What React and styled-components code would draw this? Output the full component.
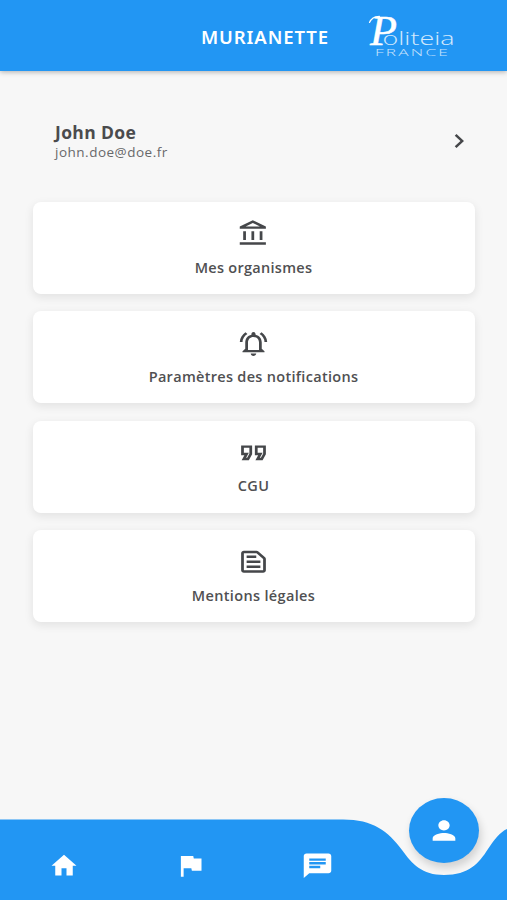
import styled, { createGlobalStyle } from 'styled-components';
import {
  MdChat,
  MdChevronRight,
  MdFlag,
  MdHome,
  MdOutlineAccountBalance,
  MdOutlineFormatQuote,
  MdOutlineNotificationsActive,
  MdOutlineTextSnippet,
  MdPerson,
} from 'react-icons/md';

const BLUE = '#2296f3';

const GlobalStyle = createGlobalStyle`
  * {
    box-sizing: border-box;
  }
  body {
    margin: 0;
    background-color: #f7f7f7;
    font-family: "Open Sans", "Noto Sans", sans-serif;
  }
`;

const Screen = styled.div`
  display: flex;
  flex-direction: column;
  width: 507px;
  height: 900px;
  overflow: hidden;
  background-color: #f7f7f7;
`;

const Header = styled.header`
  display: flex;
  flex: none;
  height: 70.5px;
  padding-left: 201px;
  background-color: ${BLUE};
  box-shadow: 0 1px 5px 0 rgba(0, 0, 0, 0.3);
`;

const Title = styled.h1`
  width: 159px;
  margin: 0;
  padding-top: 24px;
  color: white;
  font-family: "Noto Sans", sans-serif;
  font-size: 18.5px;
  line-height: 26px;
  font-weight: 600;
  letter-spacing: 0.9px;
  white-space: nowrap;
`;

const Logo = styled.svg`
  flex: none;
  width: 100px;
  height: 60px;
  margin-top: 5px;
`;

const Profile = styled.section`
  display: flex;
  flex: none;
  align-items: center;
  justify-content: space-between;
  height: 131.5px;
  padding: 8.5px 33.5px 0 55px;
`;

const ProfileName = styled.div`
  color: #4b4b4d;
  font-size: 17.5px;
  line-height: 22px;
  font-weight: 700;
  letter-spacing: 0.35px;
`;

const ProfileMail = styled.div`
  color: #68686a;
  font-size: 13.5px;
  line-height: 18px;
  letter-spacing: 0.5px;
`;

/* the glyphs are a little wider than tall, so they stretch to their box */
const Glyph = styled.span`
  display: flex;
  color: ${({ $color }) => $color || '#45474a'};

  svg {
    width: ${({ $width }) => $width || 33}px;
    height: ${({ $height }) => $height || 29.5}px;
  }
`;

const CardList = styled.main`
  display: flex;
  flex-direction: column;
  flex: 1;
  gap: 17.3px;
  padding: 0 32px 0 33px;
`;

const Card = styled.button`
  display: flex;
  flex-direction: column;
  align-items: center;
  flex: none;
  height: 92px;
  padding: 17.3px 1px 0 0;
  border: none;
  border-radius: 8px;
  background-color: white;
  box-shadow: 0 3px 9px 1px rgba(0, 0, 0, 0.08);
`;

const CardLabel = styled.span`
  margin-top: 9px;
  color: #505052;
  font-family: "Open Sans", sans-serif;
  font-size: 14.5px;
  line-height: 20px;
  font-weight: 600;
  letter-spacing: ${({ $spacing }) => $spacing}px;
`;

const NavBar = styled.nav`
  position: relative;
  flex: none;
  height: 103px;
`;

const NavShape = styled.svg`
  position: absolute;
  top: 0;
  left: 0;
  width: 507px;
  height: 103px;
`;

const NavItems = styled.div`
  position: relative;
  display: grid;
  grid-template-columns: repeat(4, 1fr);
  justify-items: center;
  padding-left: 1px;
`;

const NavItem = styled.div`
  padding-top: 54px;
`;

const ActiveItem = styled.div`
  display: flex;
  align-items: center;
  justify-content: center;
  width: 70px;
  height: 65px;
  margin-top: 1px;
  border-radius: 50%;
  background-color: ${BLUE};
  box-shadow: 2px 5px 8px 0 rgba(0, 0, 0, 0.16);
`;

const cards = [
  { label: 'Mes organismes', icon: MdOutlineAccountBalance, spacing: 0.28 },
  { label: 'Paramètres des notifications', icon: MdOutlineNotificationsActive, spacing: 0.3 },
  { label: 'CGU', icon: MdOutlineFormatQuote, spacing: 0.4 },
  { label: 'Mentions légales', icon: MdOutlineTextSnippet, spacing: 0.34 },
];

const navItems = [
  { name: 'home', icon: MdHome, width: 30 },
  { name: 'flag', icon: MdFlag, width: 33 },
  { name: 'chat', icon: MdChat, width: 33 },
];

function PoliteiaLogo() {
  return (
    <Logo viewBox="360 5 100 60" fill="white">
      <text
        x="370"
        y="45"
        fontFamily="Liberation Serif, serif"
        fontStyle="italic"
        fontSize="43"
        stroke="white"
        strokeWidth="0.5"
        textLength="27"
        lengthAdjust="spacingAndGlyphs"
      >
        P
      </text>
      <path
        d="M369.5 22.5c1.5-4 5-6 10-6.2"
        fill="none"
        stroke="white"
        strokeWidth="1.2"
        strokeLinecap="round"
      />
      <text
        x="382.5"
        y="44.5"
        fontFamily="Open Sans, sans-serif"
        fontWeight="300"
        fontSize="18"
        textLength="72"
        lengthAdjust="spacingAndGlyphs"
        opacity="0.8"
      >
        oliteia
      </text>
      <text
        x="375"
        y="55.6"
        fontFamily="Open Sans, sans-serif"
        fontWeight="300"
        fontSize="9.4"
        textLength="75"
        lengthAdjust="spacingAndGlyphs"
        letterSpacing="1.2"
        opacity="0.75"
      >
        FRANCE
      </text>
    </Logo>
  );
}

function App() {
  return (
    <Screen>
      <GlobalStyle />
      <Header>
        <Title>MURIANETTE</Title>
        <PoliteiaLogo />
      </Header>
      <Profile>
        <div>
          <ProfileName>John Doe</ProfileName>
          <ProfileMail>john.doe@doe.fr</ProfileMail>
        </div>
        <Glyph $width={30} $height={28}>
          <MdChevronRight preserveAspectRatio="none" />
        </Glyph>
      </Profile>
      <CardList>
        {cards.map(({ label, icon: Icon, spacing }) => (
          <Card key={label}>
            <Glyph>
              <Icon preserveAspectRatio="none" />
            </Glyph>
            <CardLabel $spacing={spacing}>{label}</CardLabel>
          </Card>
        ))}
      </CardList>
      <NavBar>
        <NavShape viewBox="0 797 507 103">
          <path
            d="M0 819.5H343C373 819.5 388 831 402 850C412 864 422 875 444 875C469 875 479 863 488 849C494 840 500 832 507 829V900H0Z"
            fill={BLUE}
          />
        </NavShape>
        <NavItems>
          {navItems.map(({ name, icon: Icon, width }) => (
            <NavItem key={name}>
              <Glyph $color="white" $width={width}>
                <Icon preserveAspectRatio="none" />
              </Glyph>
            </NavItem>
          ))}
          <ActiveItem>
            <Glyph $color="white" $width={34} $height={31}>
              <MdPerson preserveAspectRatio="none" />
            </Glyph>
          </ActiveItem>
        </NavItems>
      </NavBar>
    </Screen>
  );
}

export default App;
